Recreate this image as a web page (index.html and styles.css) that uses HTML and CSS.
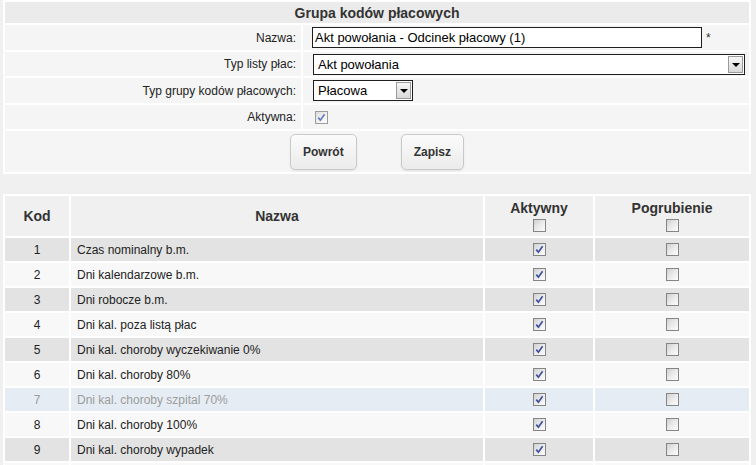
FILE: index.html
```html
<!DOCTYPE html>
<html lang="pl">
<head>
<meta charset="utf-8">
<title>Grupa kodów płacowych</title>
<link rel="stylesheet" href="styles.css">
</head>
<body>
<div class="page">
  <table class="form-table">
    <colgroup><col class="c-label"><col class="c-value"></colgroup>
    <tr class="row-title"><th colspan="2">Grupa kodów płacowych</th></tr>
    <tr class="row-a">
      <td class="label">Nazwa:</td>
      <td class="value"><div class="field"><div class="text-input">Akt powołania - Odcinek płacowy (1)</div><span class="req">*</span></div></td>
    </tr>
    <tr class="row-b">
      <td class="label">Typ listy płac:</td>
      <td class="value"><div class="select select-wide"><span class="sel-text">Akt powołania</span><span class="sel-btn"><i class="tri"></i></span></div></td>
    </tr>
    <tr class="row-a">
      <td class="label">Typ grupy kodów płacowych:</td>
      <td class="value"><div class="select select-short"><span class="sel-text">Płacowa</span><span class="sel-btn"><i class="tri"></i></span></div></td>
    </tr>
    <tr class="row-b">
      <td class="label">Aktywna:</td>
      <td class="value"><span class="cb cb-form checked"><svg viewBox="0 0 11 11"><path d="M2.3 5.6 L4.4 8.2 L8.6 2.3"/></svg></span></td>
    </tr>
    <tr class="row-buttons">
      <td colspan="2"><div class="buttons"><button class="btn">Powrót</button><button class="btn">Zapisz</button></div></td>
    </tr>
  </table>

  <table class="list-table">
    <colgroup><col class="c-kod"><col class="c-nazwa"><col class="c-akt"><col class="c-pog"></colgroup>
    <thead>
      <tr>
        <th>Kod</th>
        <th>Nazwa</th>
        <th><div class="th-label">Aktywny</div><span class="cb"></span></th>
        <th><div class="th-label">Pogrubienie</div><span class="cb"></span></th>
      </tr>
    </thead>
    <tbody>
      <tr class="odd"><td class="kod">1</td><td class="nazwa">Czas nominalny b.m.</td><td><span class="cb checked"><svg viewBox="0 0 11 11"><path d="M2.3 5.6 L4.4 8.2 L8.6 2.3"/></svg></span></td><td><span class="cb"></span></td></tr>
      <tr class="even"><td class="kod">2</td><td class="nazwa">Dni kalendarzowe b.m.</td><td><span class="cb checked"><svg viewBox="0 0 11 11"><path d="M2.3 5.6 L4.4 8.2 L8.6 2.3"/></svg></span></td><td><span class="cb"></span></td></tr>
      <tr class="odd"><td class="kod">3</td><td class="nazwa">Dni robocze b.m.</td><td><span class="cb checked"><svg viewBox="0 0 11 11"><path d="M2.3 5.6 L4.4 8.2 L8.6 2.3"/></svg></span></td><td><span class="cb"></span></td></tr>
      <tr class="even"><td class="kod">4</td><td class="nazwa">Dni kal. poza listą płac</td><td><span class="cb checked"><svg viewBox="0 0 11 11"><path d="M2.3 5.6 L4.4 8.2 L8.6 2.3"/></svg></span></td><td><span class="cb"></span></td></tr>
      <tr class="odd"><td class="kod">5</td><td class="nazwa">Dni kal. choroby wyczekiwanie 0%</td><td><span class="cb checked"><svg viewBox="0 0 11 11"><path d="M2.3 5.6 L4.4 8.2 L8.6 2.3"/></svg></span></td><td><span class="cb"></span></td></tr>
      <tr class="even"><td class="kod">6</td><td class="nazwa">Dni kal. choroby 80%</td><td><span class="cb checked"><svg viewBox="0 0 11 11"><path d="M2.3 5.6 L4.4 8.2 L8.6 2.3"/></svg></span></td><td><span class="cb"></span></td></tr>
      <tr class="disabled"><td class="kod">7</td><td class="nazwa">Dni kal. choroby szpital 70%</td><td><span class="cb checked"><svg viewBox="0 0 11 11"><path d="M2.3 5.6 L4.4 8.2 L8.6 2.3"/></svg></span></td><td><span class="cb"></span></td></tr>
      <tr class="even"><td class="kod">8</td><td class="nazwa">Dni kal. choroby 100%</td><td><span class="cb checked"><svg viewBox="0 0 11 11"><path d="M2.3 5.6 L4.4 8.2 L8.6 2.3"/></svg></span></td><td><span class="cb"></span></td></tr>
      <tr class="odd"><td class="kod">9</td><td class="nazwa">Dni kal. choroby wypadek</td><td><span class="cb checked"><svg viewBox="0 0 11 11"><path d="M2.3 5.6 L4.4 8.2 L8.6 2.3"/></svg></span></td><td><span class="cb"></span></td></tr>
      <tr class="even"><td></td><td></td><td></td><td></td></tr>
    </tbody>
  </table>
</div>
</body>
</html>
```

FILE: styles.css
```css
html, body {
  margin: 0;
  padding: 0;
}
body {
  background: #f0f0f0;
  font-family: "Liberation Sans", Arial, sans-serif;
  font-size: 12px;
  color: #222;
}
.page {
  padding: 0 0 0 3px;
}
table {
  border-collapse: separate;
  border-spacing: 2px;
  background: #fff;
  width: 748px;
  table-layout: fixed;
}
th, td {
  padding: 0;
}

/* ---------- form table ---------- */
.c-label { width: 296px; }
.c-value { width: 446px; }

.row-title { height: 21px; }
.row-title th {
  background: #ebebeb;
  font-size: 14px;
  font-weight: bold;
  color: #333;
  text-align: center;
  vertical-align: middle;
}
.form-table td {
  background: #f5f5f5;
  vertical-align: middle;
}
.row-a { height: 25px; }
.row-b { height: 24px; }
.row-buttons { height: 41px; }

.form-table .label {
  text-align: right;
  padding-right: 5px;
}
.form-table .value {
  padding-left: 9px;
}
.field {
  display: flex;
  align-items: center;
  gap: 4px;
}
.text-input {
  box-sizing: border-box;
  width: 390px;
  height: 21px;
  border: 1px solid #1e1e1e;
  background: #fff;
  font-size: 13px;
  line-height: 19px;
  padding: 0 2px;
  color: #000;
  white-space: nowrap;
}
.req {
  font-size: 12px;
  line-height: 12px;
  color: #333;
}
.select {
  box-sizing: border-box;
  display: flex;
  align-items: stretch;
  height: 21px;
  border: 1px solid #1e1e1e;
  background: #fff;
  font-size: 13px;
  color: #000;
}
.select-wide { width: 432px; margin-left: 1px; }
.select-short { width: 100px; margin-left: 1px; }
.sel-text {
  flex: 1;
  line-height: 19px;
  padding-left: 4px;
  white-space: nowrap;
}
.sel-btn {
  box-sizing: border-box;
  width: 15px;
  margin: 1px;
  border: 1px solid #9a9a9a;
  background: linear-gradient(#f6f6f6, #d9d9d9);
  display: flex;
  align-items: center;
  justify-content: center;
}
.tri {
  width: 0;
  height: 0;
  border-left: 4px solid transparent;
  border-right: 4px solid transparent;
  border-top: 4px solid #000;
  margin-top: 1px;
}

/* ---------- checkbox ---------- */
.cb {
  box-sizing: border-box;
  display: block;
  width: 13px;
  height: 13px;
  margin: 0 auto;
  border: 1px solid #858585;
  background: linear-gradient(135deg, #d0d0d0 0%, #e8e8e8 45%, #fdfdfd 100%);
}
.cb svg {
  display: block;
  width: 11px;
  height: 11px;
}
.cb path {
  fill: none;
  stroke: #3e4f9e;
  stroke-width: 1.7;
}
.cb-form {
  margin: 0 0 0 3px;
  background: linear-gradient(135deg, #dcdcdc 0%, #f0f0f0 50%, #fff 100%);
  border-color: #9c9c9c;
}
.cb-form path {
  stroke: #6a7bbd;
}

/* ---------- buttons ---------- */
.buttons {
  display: flex;
  justify-content: center;
}
.btn {
  box-sizing: border-box;
  height: 36px;
  padding: 0 12px;
  margin: 0 22px;
  border: 1px solid #c9c9c9;
  border-radius: 5px;
  background: linear-gradient(#fbfbfb, #ebebeb);
  box-shadow: 0 1px 2px rgba(0, 0, 0, 0.08);
  font-family: "Liberation Sans", Arial, sans-serif;
  font-size: 12px;
  font-weight: bold;
  color: #333;
}

/* ---------- list table ---------- */
.list-table {
  margin-top: 20px;
}
.c-kod { width: 64px; }
.c-nazwa { width: 412px; }
.c-akt { width: 108px; }
.c-pog { width: 154px; }

.list-table thead tr { height: 40px; }
.list-table th {
  background: #f0f0f0;
  font-size: 14px;
  font-weight: bold;
  color: #333;
  text-align: center;
  vertical-align: middle;
}
.th-label {
  line-height: 16px;
  margin-bottom: 3px;
}
.list-table tbody tr { height: 23px; }
.list-table td {
  vertical-align: middle;
  text-align: center;
  white-space: nowrap;
}
.list-table td.nazwa {
  text-align: left;
  padding-left: 6px;
}
tr.odd td { background: #e3e3e3; }
tr.even td { background: #f8f8f8; }
tr.disabled td {
  background: #e5ecf3;
  color: #9c9c9c;
}
```
